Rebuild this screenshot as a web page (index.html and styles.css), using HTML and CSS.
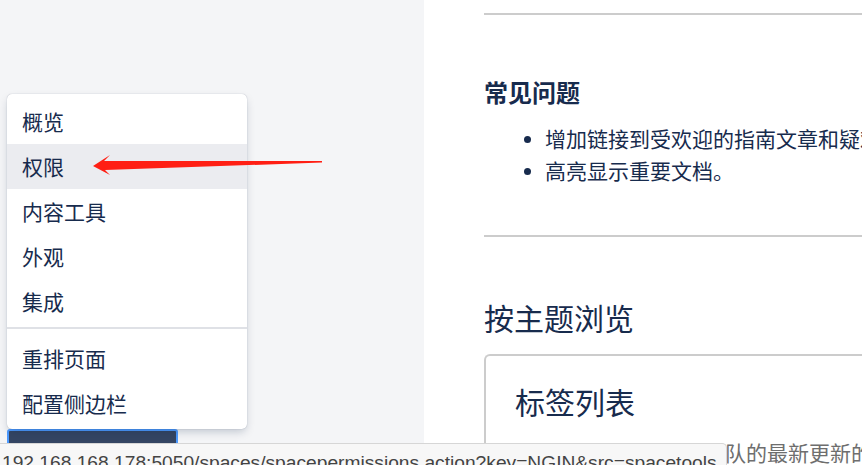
FILE: index.html
```html
<!DOCTYPE html>
<html lang="zh-CN">
<head>
    <meta charset="UTF-8">
    <title>空间概览</title>
    <link rel="stylesheet" href="styles.css">
</head>
<body>

<div class="sidebar">
    <div class="space-tools">
        <!-- 空间工具菜单 -->
        <ul class="tools-menu">
            <li>概览</li>
            <li class="active">权限</li>
            <li>内容工具</li>
            <li>外观</li>
            <li>集成</li>
            <li class="separator"></li>
            <li>重排页面</li>
            <li>配置侧边栏</li>
        </ul>
        <button class="tools-button">空间工具</button>
    </div>
</div>

<div class="main">
    <hr>
    <h3>常见问题</h3>
    <ul class="faq">
        <li>增加链接到受欢迎的指南文章和疑难解答文章。</li>
        <li>高亮显示重要文档。</li>
    </ul>
    <hr class="rule-2">
    <h2>按主题浏览</h2>
    <div class="card">
        <div class="card-title">标签列表</div>
        <p class="card-text">在此处查看有关我们团队的最新更新的信息</p>
    </div>
</div>

<!-- 标注箭头 -->
<svg class="arrow" width="240" height="30" viewBox="90 150 240 30">
    <polygon points="93,166 110,155 104,161 322,161 322,162.6 105,170 110,175" fill="#ff1f14"/>
</svg>

<div class="status-bubble">192.168.168.178:5050/spaces/spacepermissions.action?key=NGIN&amp;src=spacetools</div>

</body>
</html>
```

FILE: styles.css
```css
body {
    margin: 0;
    display: flex;
    height: 465px;
    overflow: hidden;
    font-family: "Noto Sans CJK SC", "Liberation Sans", sans-serif;
    color: #172b4d;
    background-color: #fff;
}
.sidebar {
    width: 424px;
    flex-shrink: 0;
    background-color: #f4f5f7;
    padding: 429px 0 0 7px;
    box-sizing: border-box;
}
.space-tools {
    position: relative;
}
.tools-button {
    display: block;
    width: 171px;
    height: 45px;
    padding: 0;
    background-color: #344563;
    color: #fff;
    border: 2px solid #4c9aff;
    border-radius: 3px;
    font-family: inherit;
    font-size: 21px;
}
.tools-menu {
    position: absolute;
    left: 0;
    bottom: 100%;
    width: 240px;
    margin: 0;
    padding: 5px 0 3px;
    list-style: none;
    background-color: #fff;
    border-radius: 5px;
    box-shadow: 0 4px 10px -2px rgba(9, 30, 66, 0.25), 0 0 1px rgba(9, 30, 66, 0.35);
}
.tools-menu li {
    height: 45px;
    line-height: 45px;
    padding-left: 15px;
    font-size: 21px;
}
.tools-menu li.active {
    background-color: #ebecf0;
}
.tools-menu li.separator {
    height: 2px;
    padding: 0;
    margin: 3px 0 7px;
    background-color: #dfe1e6;
}
.main {
    flex: 1;
    padding: 13px 0 0 60px;
    font-size: 21px;
    line-height: 32px;
    white-space: nowrap;
    overflow: hidden;
}
hr {
    height: 2px;
    margin: 0;
    border: none;
    background-color: #ccc;
}
h3 {
    margin: 59px 0 0;
    font-size: 24px;
    line-height: 36px;
    font-weight: bold;
}
.faq {
    margin: 12px 0 0;
    padding-left: 61px;
}
.faq li::marker {
    font-size: 18px;
}
.rule-2 {
    margin-top: 49px;
}
h2 {
    margin: 58px 0 0;
    font-size: 30px;
    line-height: 45px;
    font-weight: normal;
}
.card {
    margin-top: 14px;
    border: 2px solid #ccc;
    border-right: none;
    border-bottom: none;
    border-radius: 6px 0 0 0;
    padding: 23px 0 0 29px;
}
.card-title {
    font-size: 30px;
    line-height: 45px;
}
.card-text {
    margin: 12px 0 0;
    color: #6e6e6e;
}
.arrow {
    position: absolute;
    left: 90px;
    top: 150px;
}
.status-bubble {
    position: absolute;
    left: 0;
    bottom: 0;
    width: 727px;
    height: 22px;
    padding: 9px 0 0 2px;
    box-sizing: border-box;
    background-color: #f7f7f7;
    border-top: 1px solid #d6d6d6;
    border-right: 1px solid #d6d6d6;
    border-radius: 0 5px 0 0;
    font-family: "Liberation Sans", sans-serif;
    font-size: 19.2px;
    line-height: 20px;
    color: #444;
    white-space: nowrap;
    overflow: hidden;
}
```
